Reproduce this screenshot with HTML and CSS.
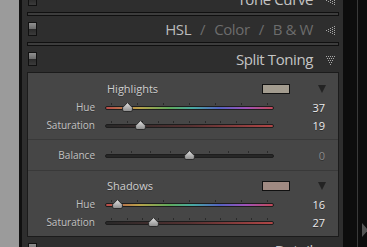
FILE: index.html
```html
<!DOCTYPE html>
<html lang="en">
<head>
    <meta charset="UTF-8">
    <title>Split Toning</title>
    <link rel="stylesheet" href="styles.css">
</head>
<body>
    <svg class="defs" width="0" height="0">
        <defs>
            <linearGradient id="knob" x1="0" y1="0" x2="0" y2="1">
                <stop offset="0" stop-color="#e4e4e4"/>
                <stop offset="1" stop-color="#8a8a8a"/>
            </linearGradient>
        </defs>
    </svg>

    <div class="panel">
        <div class="head">
            <span class="toggle"></span>
            <span class="title">Tone Curve</span>
            <svg class="dots" viewBox="0 0 9 9"><rect x="8" y="0" width="1" height="1"/><rect x="8" y="2" width="1" height="1"/><rect x="8" y="4" width="1" height="1"/><rect x="8" y="6" width="1" height="1"/><rect x="8" y="8" width="1" height="1"/><rect x="6" y="1" width="1" height="1"/><rect x="6" y="3" width="1" height="1"/><rect x="6" y="5" width="1" height="1"/><rect x="6" y="7" width="1" height="1"/><rect x="4" y="2" width="1" height="1"/><rect x="4" y="4" width="1" height="1"/><rect x="4" y="6" width="1" height="1"/><rect x="2" y="3" width="1" height="1"/><rect x="2" y="5" width="1" height="1"/><rect x="0" y="4" width="1" height="1"/></svg>
        </div>
        <div class="divider"></div>

        <div class="head">
            <span class="toggle"></span>
            <span class="title tabs"><span class="on">HSL</span><span>/</span><span>Color</span><span>/</span><span>B &amp; W</span></span>
            <svg class="dots" viewBox="0 0 9 9"><rect x="8" y="0" width="1" height="1"/><rect x="8" y="2" width="1" height="1"/><rect x="8" y="4" width="1" height="1"/><rect x="8" y="6" width="1" height="1"/><rect x="8" y="8" width="1" height="1"/><rect x="6" y="1" width="1" height="1"/><rect x="6" y="3" width="1" height="1"/><rect x="6" y="5" width="1" height="1"/><rect x="6" y="7" width="1" height="1"/><rect x="4" y="2" width="1" height="1"/><rect x="4" y="4" width="1" height="1"/><rect x="4" y="6" width="1" height="1"/><rect x="2" y="3" width="1" height="1"/><rect x="2" y="5" width="1" height="1"/><rect x="0" y="4" width="1" height="1"/></svg>
        </div>
        <div class="divider"></div>

        <div class="head">
            <span class="toggle"></span>
            <span class="title">Split Toning</span>
            <svg class="dots" viewBox="0 0 9 9"><rect x="0" y="0" width="1" height="1"/><rect x="2" y="0" width="1" height="1"/><rect x="4" y="0" width="1" height="1"/><rect x="6" y="0" width="1" height="1"/><rect x="8" y="0" width="1" height="1"/><rect x="1" y="2" width="1" height="1"/><rect x="3" y="2" width="1" height="1"/><rect x="5" y="2" width="1" height="1"/><rect x="7" y="2" width="1" height="1"/><rect x="2" y="4" width="1" height="1"/><rect x="4" y="4" width="1" height="1"/><rect x="6" y="4" width="1" height="1"/><rect x="3" y="6" width="1" height="1"/><rect x="5" y="6" width="1" height="1"/><rect x="4" y="8" width="1" height="1"/></svg>
        </div>

        <div class="box">
            <!-- Highlights -->
            <div class="group">
                <div class="group-head">
                    <span class="group-name">Highlights</span>
                    <span class="swatch highlights"></span>
                    <span class="arrow"></span>
                </div>
                <div class="row">
                    <span class="label">Hue</span>
                    <div class="slider">
                        <div class="ticks"><span></span><span></span><span></span><span></span><span></span><span></span><span></span></div>
                        <div class="track hue"></div>
                        <svg class="thumb" style="left: 16.5px" viewBox="0 0 11 10"><path d="M5.5 0.6 L10.4 5.6 V8 A1.5 1.5 0 0 1 8.9 9.5 H2.1 A1.5 1.5 0 0 1 0.6 8 V5.6 Z"/></svg>
                    </div>
                    <span class="value">37</span>
                </div>
                <div class="row">
                    <span class="label">Saturation</span>
                    <div class="slider">
                        <div class="ticks"><span></span><span></span><span></span><span></span><span></span><span></span><span></span><span></span><span></span><span></span><span></span></div>
                        <div class="track sat"></div>
                        <svg class="thumb" style="left: 30.1px" viewBox="0 0 11 10"><path d="M5.5 0.6 L10.4 5.6 V8 A1.5 1.5 0 0 1 8.9 9.5 H2.1 A1.5 1.5 0 0 1 0.6 8 V5.6 Z"/></svg>
                    </div>
                    <span class="value">19</span>
                </div>
            </div>

            <!-- Balance -->
            <div class="group balance">
                <div class="row">
                    <span class="label">Balance</span>
                    <div class="slider">
                        <div class="ticks"><span></span><span></span><span></span><span></span><span></span><span></span><span></span><span></span><span></span></div>
                        <div class="track plain"></div>
                        <svg class="thumb" style="left: 78.5px" viewBox="0 0 11 10"><path d="M5.5 0.6 L10.4 5.6 V8 A1.5 1.5 0 0 1 8.9 9.5 H2.1 A1.5 1.5 0 0 1 0.6 8 V5.6 Z"/></svg>
                    </div>
                    <span class="value dim">0</span>
                </div>
            </div>

            <!-- Shadows -->
            <div class="group">
                <div class="group-head">
                    <span class="group-name">Shadows</span>
                    <span class="swatch shadows"></span>
                    <span class="arrow"></span>
                </div>
                <div class="row">
                    <span class="label">Hue</span>
                    <div class="slider">
                        <div class="ticks"><span></span><span></span><span></span><span></span><span></span><span></span><span></span></div>
                        <div class="track hue"></div>
                        <svg class="thumb" style="left: 7.4px" viewBox="0 0 11 10"><path d="M5.5 0.6 L10.4 5.6 V8 A1.5 1.5 0 0 1 8.9 9.5 H2.1 A1.5 1.5 0 0 1 0.6 8 V5.6 Z"/></svg>
                    </div>
                    <span class="value">16</span>
                </div>
                <div class="row">
                    <span class="label">Saturation</span>
                    <div class="slider">
                        <div class="ticks"><span></span><span></span><span></span><span></span><span></span><span></span><span></span><span></span><span></span><span></span><span></span></div>
                        <div class="track sat"></div>
                        <svg class="thumb" style="left: 42.6px" viewBox="0 0 11 10"><path d="M5.5 0.6 L10.4 5.6 V8 A1.5 1.5 0 0 1 8.9 9.5 H2.1 A1.5 1.5 0 0 1 0.6 8 V5.6 Z"/></svg>
                    </div>
                    <span class="value">27</span>
                </div>
            </div>
        </div>

        <div class="head">
            <span class="toggle"></span>
            <span class="title">Detail</span>
            <svg class="dots" viewBox="0 0 9 9"><rect x="8" y="0" width="1" height="1"/><rect x="8" y="2" width="1" height="1"/><rect x="8" y="4" width="1" height="1"/><rect x="8" y="6" width="1" height="1"/><rect x="8" y="8" width="1" height="1"/><rect x="6" y="1" width="1" height="1"/><rect x="6" y="3" width="1" height="1"/><rect x="6" y="5" width="1" height="1"/><rect x="6" y="7" width="1" height="1"/><rect x="4" y="2" width="1" height="1"/><rect x="4" y="4" width="1" height="1"/><rect x="4" y="6" width="1" height="1"/><rect x="2" y="3" width="1" height="1"/><rect x="2" y="5" width="1" height="1"/><rect x="0" y="4" width="1" height="1"/></svg>
        </div>
    </div>

    <div class="rail"></div>
    <div class="rail-edge"><span class="rail-arrow"></span></div>
</body>
</html>
```

FILE: styles.css
```css
body {
    margin: 0;
    height: 247px;
    overflow: hidden;
    display: flex;
    padding-left: 19px;
    background: #9b9b9b;
    font-family: "Open Sans", sans-serif;
}

.defs {
    position: absolute;
}

.panel {
    flex-shrink: 0;
    width: 312px;
    margin-top: -14px;
    padding: 0 4px 0 5px;
    border-left: 3px solid #101010;
    background: #2e2e2e;
}

/* panel headers */
.head {
    height: 26px;
    display: flex;
    align-items: center;
}

.toggle {
    width: 9px;
    height: 14px;
    box-sizing: border-box;
    margin-left: 1px;
    border: 1px solid #111;
    background: linear-gradient(#909090, #6a6a6a 50%, #2a2a2a 50%, #3b3b3b);
}

.title {
    flex: 1;
    text-align: right;
    font-size: 15px;
    letter-spacing: -0.4px;
    color: #c4c4c4;
    line-height: 20px;
}

.tabs {
    display: flex;
    justify-content: flex-end;
    gap: 9px;
    color: #6c6c6c;
}

.tabs .on {
    color: #bcbcbc;
}

.dots {
    width: 9px;
    height: 9px;
    margin: 3px 4px 0 13px;
    fill: #a9a9a9;
}

.divider {
    height: 2px;
    border: 1px solid #101010;
    background: #3d3d3d;
}

/* split toning box */
.box {
    border: 1px solid #1b1b1b;
    background: #464646;
}

.group {
    padding: 6px 0 5px;
}

.group + .group {
    border-top: 1px solid #393939;
}

.group:last-child {
    padding-top: 5px;
}

.balance {
    padding: 6px 0;
}

.group-head {
    height: 19px;
    display: flex;
    align-items: center;
    padding: 0 12px 0 79px;
}

.group-name {
    flex: 1;
    font-size: 11px;
    color: #cecece;
    text-shadow: 0 1px 0 rgba(0, 0, 0, 0.25);
}

.swatch {
    width: 28px;
    height: 10px;
    box-sizing: border-box;
    margin-right: 28px;
    border: 1px solid #111;
}

.swatch.highlights {
    background: #a39c8f;
}

.swatch.shadows {
    background: #a08a82;
}

.arrow {
    width: 0;
    height: 0;
    border-left: 4px solid transparent;
    border-right: 4px solid transparent;
    border-top: 8px solid #232323;
}

.row {
    height: 18px;
    display: grid;
    grid-template-columns: 67px 169px 1fr;
    column-gap: 10px;
    align-items: center;
    padding-right: 13px;
}

.label {
    text-align: right;
    font-size: 10px;
    color: #c2c2c2;
    text-shadow: 0 1px 0 rgba(0, 0, 0, 0.25);
}

.value {
    text-align: right;
    font-size: 11px;
    color: #ececec;
    text-shadow: 0 1px 0 rgba(0, 0, 0, 0.35);
}

.value.dim {
    color: #8c8c8c;
}

/* sliders */
.slider {
    position: relative;
    height: 18px;
    box-sizing: border-box;
    padding-top: 5px;
}

.ticks {
    height: 2px;
    display: flex;
    justify-content: space-between;
    margin: 0 6px 1px;
}

.ticks span {
    width: 1px;
    background: #2a2a2a;
}

.track {
    height: 4px;
    box-sizing: border-box;
    border: 1px solid #1d1d1d;
    border-radius: 2px;
}

.track.hue {
    background: linear-gradient(to right, #b94a4a, #b9a24a 20%, #5faa5c 38%, #48a9a2 52%, #5562c2 68%, #a052b8 84%, #c24a58);
}

.track.sat {
    background: linear-gradient(to right, #282828, #553131 50%, #b04646);
}

.track.plain {
    background: #262626;
}

.thumb {
    position: absolute;
    top: 4px;
    width: 11px;
    height: 10px;
    fill: url(#knob);
    stroke: #2b2b2b;
    stroke-width: 1;
}

/* right edge */
.rail {
    flex-shrink: 0;
    width: 14px;
    background: #0d0d0d;
}

.rail-edge {
    flex: 1;
    border-left: 1px solid #3a3a3a;
    background: #0d0d0d;
    padding: 223px 0 0 4px;
}

.rail-arrow {
    display: block;
    width: 0;
    height: 0;
    border-left: 6px solid #555;
    border-top: 7px solid transparent;
    border-bottom: 7px solid transparent;
}
```
